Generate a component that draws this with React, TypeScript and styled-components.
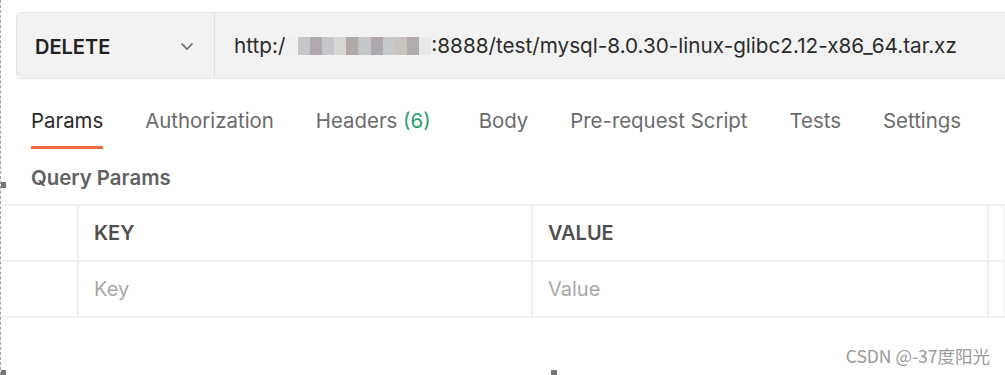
import React from "react";
import styled, { createGlobalStyle } from "styled-components";

const GlobalStyle = createGlobalStyle`
  html, body {
    margin: 0;
    padding: 0;
    background: #ffffff;
  }
  body {
    font-family: Inter, "Noto Sans", "Noto Sans CJK SC", sans-serif;
  }
`;

const Page = styled.div`
  position: relative;
  width: 1005px;
  height: 375px;
  box-sizing: border-box;
  border-left: 1px dashed #a0a0a0;
  overflow: hidden;
  background: #fff;
`;

/* url bar */
const RequestBar = styled.div`
  display: flex;
  height: 67px;
  margin: 12px 0 0 15px;
  background: #f2f2f2;
  border: 1px solid #e6e6e6;
  border-right: none;
  border-radius: 5px 0 0 5px;
  box-sizing: border-box;
`;

const MethodSelect = styled.div`
  display: flex;
  align-items: center;
  justify-content: space-between;
  width: 198px;
  padding: 2px 20px 0 18px;
  box-sizing: border-box;
  border-right: 1px solid #e2e2e2;
  font-size: 20px;
  font-weight: 600;
  color: #212121;
`;

const UrlField = styled.div`
  display: flex;
  align-items: center;
  padding-left: 19px;
  font-size: 20.7px;
  color: #2b2b2b;
  white-space: nowrap;
`;

const Blurred = styled.span`
  display: inline-flex;
  width: 146px;
  height: 18px;
  filter: blur(0.6px);
`;

const Pixel = styled.span<{ $c: string }>`
  flex: 1;
  background: ${(p) => p.$c};
`;

/* tabs */
const Tabs = styled.div`
  display: flex;
  gap: 42px;
  margin-top: 30px;
  padding-left: 30px;
`;

const Tab = styled.div<{ $active?: boolean }>`
  font-size: 20.4px;
  line-height: 24px;
  padding-bottom: 13px;
  color: ${(p) => (p.$active ? "#2a2a2a" : "#6b6b6b")};
  border-bottom: 3px solid ${(p) => (p.$active ? "#f26b3a" : "transparent")};
  white-space: nowrap;
`;

const Count = styled.span`
  color: #2f9e6a;
  padding-right: 6px;
`;

const SectionTitle = styled.div`
  margin-top: 18px;
  padding-left: 30px;
  font-size: 20.4px;
  line-height: 22px;
  font-weight: 600;
  color: #616161;
`;

/* params table */
const Table = styled.div`
  display: grid;
  grid-template-columns: 78px 454px 456px 1fr;
  margin-top: 15px;
  border-top: 2px solid #f0f0f0;
`;

const Cell = styled.div<{ $head?: boolean }>`
  display: flex;
  align-items: center;
  height: 54px;
  padding-left: 15px;
  border-right: 2px solid #f0f0f0;
  border-bottom: 2px solid #f0f0f0;
  font-size: 20px;
  font-weight: ${(p) => (p.$head ? 600 : 400)};
  color: ${(p) => (p.$head ? "#505050" : "#a8a8a8")};
  white-space: nowrap;
  overflow: hidden;
`;

const Watermark = styled.div`
  position: absolute;
  right: 15px;
  bottom: 7px;
  font-family: "Noto Sans CJK SC", "Noto Sans", sans-serif;
  font-size: 17.5px;
  color: #999;
`;

const Marker = styled.span<{ $x: number; $y: number }>`
  position: absolute;
  left: ${(p) => p.$x}px;
  top: ${(p) => p.$y}px;
  width: 6px;
  height: 6px;
  background: #777;
`;

const pixels = ["#f0f0f0", "#c6c6ca", "#b0a8ac", "#c4c6ca", "#d8d8d2", "#b2aaaa", "#c4c6ca", "#b0a8ac", "#c6c8cc", "#c8c4bc", "#b2acae", "#e8e8e8"];

const ChevronDown = () => (
  <svg width="14" height="9" viewBox="0 0 14 9" fill="none">
    <path d="M1.5 1.5 L7 7 L12.5 1.5" stroke="#6b6b6b" strokeWidth="1.6" />
  </svg>
);

const tabs = ["Authorization", "Headers", "Body", "Pre-request Script", "Tests", "Settings"];

const App = () => (
  <>
    <GlobalStyle />
    <Page>
      <Marker $x={-1} $y={182} />
      <Marker $x={-1} $y={370} />
      <Marker $x={550} $y={370} />

      <RequestBar>
        <MethodSelect>
          DELETE
          <ChevronDown />
        </MethodSelect>
        <UrlField>
          http:/
          <Blurred>
            {pixels.map((c, i) => (
              <Pixel key={i} $c={c} />
            ))}
          </Blurred>
          :8888/test/mysql-8.0.30-linux-glibc2.12-x86_64.tar.xz
        </UrlField>
      </RequestBar>

      <Tabs>
        <Tab $active>Params</Tab>
        {tabs.map((t) => (
          <Tab key={t}>
            {t === "Headers" ? (
              <>
                Headers <Count>(6)</Count>
              </>
            ) : (
              t
            )}
          </Tab>
        ))}
      </Tabs>

      <SectionTitle>Query Params</SectionTitle>

      <Table>
        <Cell $head />
        <Cell $head>KEY</Cell>
        <Cell $head>VALUE</Cell>
        <Cell $head style={{ color: "#c8a060" }}>DESCRIPTION</Cell>
        <Cell />
        <Cell>Key</Cell>
        <Cell>Value</Cell>
        <Cell style={{ color: "#f0d9a0" }}>Description</Cell>
      </Table>

      <Watermark>CSDN @-37度阳光</Watermark>
    </Page>
  </>
);

export default App;
